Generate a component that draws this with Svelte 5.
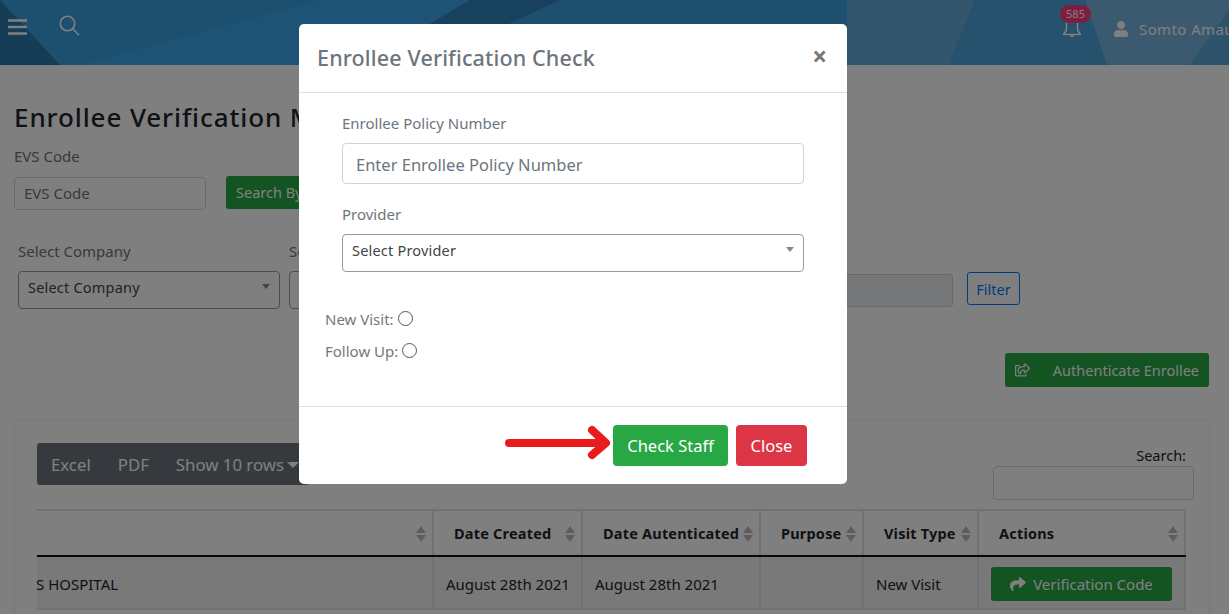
<script lang="ts">
  const columns = [
    { title: 'Date Created', width: 149 },
    { title: 'Date Autenticated', width: 178 },
    { title: 'Purpose', width: 103 },
    { title: 'Visit Type', width: 115 },
    { title: 'Actions', width: 207 }
  ];
  const sharePath =
    'M503.691 189.836L327.687 37.851C312.281 24.546 288 35.347 288 56.015v80.053C127.371 137.907 0 170.1 0 322.326c0 61.441 39.581 122.309 83.333 154.132 13.653 9.931 33.111-2.533 28.077-18.631C66.066 312.814 132.917 274.316 288 272.085V360c0 20.7 24.3 31.453 39.687 18.164l176.004-152c11.071-9.562 11.086-26.753 0-36.328z';
  const shareSquarePath =
    'M561.938 158.06L417.94 14.092C387.926-15.922 336 5.097 336 48.032v57.198c-42.45 1.88-84.03 6.55-120.76 17.99-35.17 10.95-63.07 27.58-82.91 49.42C108.22 199.2 96 232.6 96 271.94c0 61.697 33.178 112.455 84.87 144.76 37.546 23.508 85.248-12.651 71.02-55.74-15.515-47.119-17.156-70.923 84.11-78.76V336c0 42.993 51.968 63.913 81.94 33.94l143.998-144c18.75-18.74 18.75-49.14 0-67.88zM384 336V232.16C255.309 234.082 166.492 255.35 206.31 376 176.79 357.55 144 324.08 144 271.94c0-109.334 129.14-118.947 240-119.85V48l144 144-144 144zm24.74 84.493a82.658 82.658 0 0 0 20.974-9.303c7.976-4.952 18.286.826 18.286 10.214V464c0 26.51-21.49 48-48 48H48c-26.51 0-48-21.49-48-48V112c0-26.51 21.49-48 48-48h132c6.627 0 12 5.373 12 12v4.486c0 4.917-2.987 9.369-7.569 11.152-13.702 5.331-26.396 11.537-38.05 18.585a12.138 12.138 0 0 1-6.28 1.777H54a6 6 0 0 0-6 6v340a6 6 0 0 0 6 6h340a6 6 0 0 0 6-6v-25.966c0-5.37 3.579-10.059 8.74-11.541z';
</script>

<div class="page">
  <header class="topbar">
    <svg class="topbar-bg" viewBox="0 0 1229 65" preserveAspectRatio="none" aria-hidden="true">
      <rect width="1229" height="65" fill="#3a9fdf" />
      <polygon points="0,0 60,65 0,65" fill="#2a7aad" />
      <polygon points="320,0 470,0 390,65 80,65" fill="#3ba6ea" />
      <polygon points="470,0 560,0 420,65 360,65" fill="#2f83ba" />
      <polygon points="975,0 1085,0 1107,65 948,65" fill="#4da4da" />
      <polygon points="1085,0 1229,0 1229,10 1190,65 1107,65" fill="#76b4de" />
      <polygon points="1229,10 1190,65 1229,65" fill="#5aa5d8" />
      <polygon points="847,0 975,0 948,65 847,65" fill="#68add9" />
    </svg>
    <button class="icon-btn menu" aria-label="Menu">
      <svg viewBox="0 0 19 16" width="19" height="16"><path d="M0 1.5h19M0 8h19M0 14.5h19" stroke="currentColor" stroke-width="2.6" /></svg>
    </button>
    <button class="icon-btn find" aria-label="Search">
      <svg viewBox="0 0 21 21" width="21" height="21" fill="none" stroke="currentColor" stroke-width="1.6"><circle cx="8.5" cy="8.5" r="7.2" /><path d="M13.8 13.8l6.2 6.4" /></svg>
    </button>
    <div class="spacer"></div>
    <div class="bell">
      <svg viewBox="0 0 18 18" width="18" height="18" fill="none" stroke="currentColor" stroke-width="1.5"><path d="M3.500 0v9q0 4-3 6.400h17q-3-2.400-3-6.400V0" /><path d="M7.500 16.500q1.500 2 3 0" /></svg>
      <span class="badge">585</span>
    </div>
    <svg class="user-icon" viewBox="0 0 448 512" width="14" height="16"><path fill="currentColor" d="M224 256c70.700 0 128-57.300 128-128S294.700 0 224 0 96 57.300 96 128s57.300 128 128 128zm89.600 32h-16.700c-22.200 10.200-46.900 16-72.900 16s-50.600-5.800-72.900-16h-16.700C60.200 288 0 348.200 0 422.400V464c0 26.500 21.500 48 48 48h352c26.500 0 48-21.500 48-48v-41.600c0-74.200-60.200-134.400-134.400-134.400z" /></svg>
    <span class="user-name">Somto Amau</span>
  </header>

  <main class="content">
    <h1>Enrollee Verification Management</h1>

    <div class="field-label evs-label">EVS Code</div>
    <div class="evs-row">
      <input class="control evs-input" placeholder="EVS Code" />
      <button class="btn green search-evs">Search By EVS Code</button>
    </div>

    <div class="filters">
      <div class="filter-col first">
        <div class="field-label">Select Company</div>
        <div class="select"><span>Select Company</span><i class="caret"></i></div>
      </div>
      <div class="filter-col second">
        <div class="field-label">Select Provider</div>
        <div class="select"><span>Select Provider</span><i class="caret"></i></div>
      </div>
      <div class="date-box"></div>
      <button class="btn-filter">Filter</button>
    </div>

    <div class="auth-row">
      <button class="btn green auth">
        <svg viewBox="0 0 576 512" width="18" height="16"><path fill="currentColor" d={shareSquarePath} /></svg>
        <span>Authenticate Enrollee</span>
      </button>
    </div>

    <section class="card">
      <div class="card-top">
        <div class="toolbar">
          <span>Excel</span>
          <span>PDF</span>
          <span class="rows">Show 10 rows<i class="caret light"></i></span>
        </div>
        <label class="search-box">
          <span>Search:</span>
          <input class="control" />
        </label>
      </div>

      <div class="table-wrap">
        <table>
          <colgroup>
            <col style="width: 396px" />
            {#each columns as col}
              <col style="width: {col.width}px" />
            {/each}
          </colgroup>
          <thead>
            <tr>
              <th class="lead"><i class="sort"></i></th>
              {#each columns as col}
                <th>{col.title}<i class="sort"></i></th>
              {/each}
            </tr>
          </thead>
          <tbody>
            <tr>
              <td class="lead"><span class="clipped">S HOSPITAL</span></td>
              <td>August 28th 2021</td>
              <td>August 28th 2021</td>
              <td></td>
              <td>New Visit</td>
              <td>
                <button class="btn green verify">
                  <svg viewBox="0 0 512 512" width="16" height="16"><path fill="currentColor" d={sharePath} /></svg>
                  Verification Code
                </button>
              </td>
            </tr>
          </tbody>
        </table>
      </div>
    </section>
  </main>

  <div class="backdrop"></div>

  <div class="modal" role="dialog">
    <div class="modal-head">
      <h2>Enrollee Verification Check</h2>
      <span class="close-x">×</span>
    </div>
    <div class="modal-body">
      <div class="modal-field">
        <div class="modal-label">Enrollee Policy Number</div>
        <input class="policy" placeholder="Enter Enrollee Policy Number" />
      </div>
      <div class="modal-field provider">
        <div class="modal-label">Provider</div>
        <div class="select modal-select"><span>Select Provider</span><i class="caret"></i></div>
      </div>
      <div class="radio-row new-visit">New Visit: <i class="radio"></i></div>
      <div class="radio-row">Follow Up: <i class="radio"></i></div>
    </div>
    <div class="modal-foot">
      <svg class="arrow" viewBox="0 0 112 40" width="112" height="40" fill="none" stroke="#e81c1c" stroke-linecap="round" stroke-linejoin="round">
        <path d="M7 21h94" stroke-width="8" />
        <path d="M90 8l14 13-14 12" stroke-width="8" />
      </svg>
      <button class="btn-lg check">Check Staff</button>
      <button class="btn-lg close">Close</button>
    </div>
  </div>
</div>

<style>
  :global(body) {
    margin: 0;
  }
  .page {
    position: relative;
    width: 1229px;
    height: 614px;
    overflow: hidden;
    background: #fff;
    font-family: 'Noto Sans', 'Open Sans', sans-serif;
    color: #212529;
  }
  button {
    font-family: inherit;
  }

  /* top bar */
  .topbar {
    position: relative;
    height: 65px;
    display: flex;
    align-items: flex-start;
    color: #fff;
    white-space: nowrap;
    overflow: hidden;
  }
  .topbar-bg {
    position: absolute;
    inset: 0;
    width: 100%;
    height: 100%;
  }
  .icon-btn {
    position: relative;
    background: none;
    border: 0;
    padding: 0;
    color: #fff;
    display: block;
  }
  .menu {
    margin: 19px 0 0 8px;
    height: 16px;
  }
  .find {
    margin: 15px 0 0 32px;
    height: 21px;
  }
  .spacer {
    flex: 1;
  }
  .bell {
    position: relative;
    margin: 19px 33px 0 0;
    width: 18px;
    height: 18px;
    color: #fff;
  }
  .badge {
    position: absolute;
    left: -3px;
    top: -14px;
    width: 31px;
    height: 18px;
    border-radius: 9px;
    background: #fa3a80;
    color: #fff;
    font-size: 11px;
    line-height: 18px;
    text-align: center;
  }
  .user-icon {
    position: relative;
    margin: 21px 11px 0 0;
    color: #fff;
  }
  .user-name {
    position: relative;
    margin-top: 19px;
    width: 90px;
    overflow: hidden;
    font-size: 15px;
    line-height: 20px;
    letter-spacing: 0.4px;
    color: #fff;
  }

  /* page body */
  .content {
    padding: 0 20px 0 14px;
  }
  h1 {
    margin: 34px 0 0;
    font-size: 26px;
    line-height: 36px;
    font-weight: 500;
    letter-spacing: 0.9px;
    white-space: nowrap;
    color: #212529;
  }
  .field-label {
    font-size: 15px;
    line-height: 20px;
    color: #6c757d;
    white-space: nowrap;
  }
  .evs-label {
    margin-top: 11px;
  }
  .evs-row {
    display: flex;
    gap: 20px;
    margin-top: 10px;
    align-items: flex-start;
  }
  .control {
    box-sizing: border-box;
    border: 1px solid #ced4da;
    border-radius: 4px;
    background: #fff;
    font-family: inherit;
    font-size: 15px;
    padding: 0 0 1px 9px;
    color: #495057;
  }
  .control::placeholder {
    color: #6c757d;
    opacity: 1;
  }
  .evs-input {
    width: 192px;
    height: 33px;
    margin-top: 1px;
  }
  .btn {
    border: 0;
    border-radius: 3px;
    color: #fff;
    display: flex;
    align-items: center;
    white-space: nowrap;
    font-size: 14.500px;
  }
  .green {
    background: #28a745;
  }
  .search-evs {
    height: 33px;
    padding: 0 10px 2px;
  }
  .filters {
    display: flex;
    align-items: flex-start;
    margin: 31px 0 0 4px;
  }
  .filter-col {
    flex: none;
  }
  .filter-col.first {
    width: 262px;
    margin-right: 9px;
  }
  .filter-col.second {
    width: 262px;
  }
  .select {
    box-sizing: border-box;
    height: 38px;
    margin-top: 10px;
    border: 1px solid #999;
    border-radius: 4px;
    background: #fff;
    display: flex;
    align-items: center;
    justify-content: space-between;
    padding: 0 9px 6px;
    font-size: 14.500px;
    letter-spacing: 0.2px;
    color: #444;
  }
  .caret {
    display: block;
    width: 0;
    height: 0;
    border-left: 4.500px solid transparent;
    border-right: 4.500px solid transparent;
    border-top: 5px solid #888;
    margin-top: -2px;
  }
  .caret.light {
    display: inline-block;
    border-left-width: 6px;
    border-right-width: 6px;
    border-top: 6px solid #fff;
    margin: 0 0 3px 3px;
    vertical-align: middle;
  }
  .date-box {
    box-sizing: border-box;
    width: 402px;
    height: 33px;
    margin: 33px 0 0 0;
    border: 1px solid #ced4da;
    border-radius: 3px;
    background: #e9ecef;
  }
  .btn-filter {
    box-sizing: border-box;
    width: 53px;
    height: 33px;
    margin: 31px 0 0 14px;
    padding: 0;
    border: 1px solid #007bff;
    border-radius: 3px;
    background: none;
    color: #007bff;
    font-size: 14.500px;
  }
  .auth-row {
    display: flex;
    justify-content: flex-end;
    margin-top: 44px;
  }
  .auth {
    box-sizing: border-box;
    width: 204px;
    height: 34px;
    padding: 0 10px 0 10px;
    gap: 23px;
    border-radius: 3px;
  }

  /* table card */
  .card {
    box-sizing: border-box;
    margin: 34px 0 0 1px;
    width: 1194px;
    height: 300px;
    padding: 22px 15px 0 22px;
    background: #fff;
    box-shadow: 0 0 3px rgba(0, 0, 0, 0.12);
  }
  .card-top {
    display: flex;
    justify-content: space-between;
    align-items: flex-start;
    height: 66px;
  }
  .toolbar {
    display: flex;
    align-items: center;
    gap: 27px;
    height: 42px;
    width: 272px;
    padding-left: 14px;
    box-sizing: border-box;
    background: #6c757d;
    border-radius: 3px;
    color: #fff;
    font-size: 16.800px;
    white-space: nowrap;
  }
  .search-box {
    display: flex;
    flex-direction: column;
    align-items: flex-end;
    font-size: 14.500px;
    line-height: 20px;
    color: #212529;
  }
  .search-box span {
    margin: 2px 8px 1px 0;
  }
  .search-box .control {
    width: 201px;
    height: 34px;
  }
  .table-wrap {
    width: 1149px;
    overflow: hidden;
  }
  table {
    table-layout: fixed;
    border-collapse: collapse;
    width: 1148px;
    font-size: 15px;
    border-top: 2px solid #dee2e6;
  }
  th {
    position: relative;
    box-sizing: border-box;
    height: 46px;
    padding: 0 0 0 20px;
    text-align: left;
    white-space: nowrap;
    font-weight: 700;
    font-size: 14.500px;
    letter-spacing: 0.2px;
    border-left: 2px solid #dee2e6;
    border-right: 2px solid #dee2e6;
    border-bottom: 2px solid #111;
    color: #212529;
  }
  th.lead,
  td.lead {
    border-left: 0;
    padding-left: 0;
  }
  td {
    box-sizing: border-box;
    height: 53px;
    padding: 2px 0 0 12px;
    white-space: nowrap;
    border: 2px solid #dee2e6;
    border-top: 0;
    background: #f2f2f2;
    color: #212529;
  }
  td.lead {
    overflow: hidden;
  }
  .clipped {
    display: block;
    margin-left: -1px;
  }
  .sort {
    position: absolute;
    right: 6px;
    top: 15px;
    width: 0;
    height: 0;
    border-left: 5px solid transparent;
    border-right: 5px solid transparent;
    border-bottom: 7px solid #bbb;
  }
  .sort::after {
    content: '';
    position: absolute;
    left: -5px;
    top: 9px;
    width: 0;
    height: 0;
    border-left: 5px solid transparent;
    border-right: 5px solid transparent;
    border-top: 7px solid #bbb;
  }
  .verify {
    box-sizing: border-box;
    width: 181px;
    height: 34px;
    justify-content: center;
    gap: 7px;
    margin-left: 0;
    font-size: 15px;
  }

  /* modal */
  .backdrop {
    position: absolute;
    inset: 0;
    background: rgba(0, 0, 0, 0.5);
  }
  .modal {
    position: absolute;
    left: 299px;
    top: 24px;
    box-sizing: border-box;
    width: 548px;
    height: 460px;
    background: #fff;
    border-radius: 5px;
    display: flex;
    flex-direction: column;
  }
  .modal-head {
    box-sizing: border-box;
    height: 69px;
    flex: none;
    padding: 0 20px 2px 18px;
    display: flex;
    align-items: center;
    justify-content: space-between;
    border-bottom: 1px solid #dee2e6;
  }
  h2 {
    margin: 0;
    font-size: 21.500px;
    font-weight: 500;
    letter-spacing: 0.15px;
    color: #6c757d;
  }
  .close-x {
    font-size: 26px;
    font-weight: 700;
    line-height: 24px;
    margin-top: -3px;
    color: #777;
  }
  .modal-body {
    flex: 1;
    padding: 19px 0 0 26px;
  }
  .modal-field {
    margin: 0 43px 0 17px;
  }
  .modal-field.provider {
    margin-top: 19px;
  }
  .modal-label {
    font-size: 15px;
    line-height: 22px;
    color: #6c757d;
  }
  .policy {
    box-sizing: border-box;
    display: block;
    width: 462px;
    height: 41px;
    margin-top: 9px;
    padding: 2px 13px 0;
    border: 1px solid #ced4da;
    border-radius: 4px;
    font-family: inherit;
    font-size: 16.500px;
  }
  .policy::placeholder {
    color: #6c757d;
    opacity: 1;
  }
  .modal-select {
    width: 462px;
    margin-top: 9px;
  }
  .radio-row {
    display: flex;
    align-items: center;
    gap: 4px;
    height: 32px;
    font-size: 15px;
    color: #777;
  }
  .new-visit {
    margin-top: 31px;
  }
  .radio {
    box-sizing: border-box;
    display: block;
    width: 15px;
    height: 15px;
    margin-top: -2px;
    border: 1px solid #555;
    border-radius: 50%;
  }
  .modal-foot {
    box-sizing: border-box;
    flex: none;
    height: 78px;
    padding: 18px 40px 0 0;
    border-top: 1px solid #dee2e6;
    display: flex;
    justify-content: flex-end;
    align-items: flex-start;
    gap: 8px;
    position: relative;
  }
  .arrow {
    position: absolute;
    left: 203px;
    top: 15px;
  }
  .btn-lg {
    height: 41px;
    border: 0;
    border-radius: 4px;
    color: #fff;
    font-size: 16.500px;
  }
  .check {
    width: 115px;
    background: #28a745;
    padding: 0;
  }
  .close {
    width: 71px;
    background: #dc3545;
    padding: 0;
  }
</style>
